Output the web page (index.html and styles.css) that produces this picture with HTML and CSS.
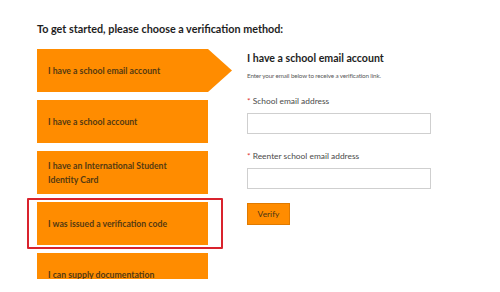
FILE: index.html
```html
<!DOCTYPE html>
<html>
<head>
<meta charset="utf-8">
<link rel="stylesheet" href="styles.css">
</head>
<body>
<div class="page">
  <h1 class="title">To get started, please choose a verification method:</h1>
  <div class="main">
    <div class="methods">
      <div class="method active"><span>I have a school email account</span></div>
      <div class="method"><span>I have a school account</span></div>
      <div class="method"><span>I have an International Student<br>Identity Card</span></div>
      <div class="method highlighted"><span>I was issued a verification code</span></div>
      <div class="method"><span>I can supply documentation</span></div>
    </div>
    <div class="panel">
      <h2 class="panel-title">I have a school email account</h2>
      <p class="panel-sub">Enter your email below to receive a verification link.</p>
      <label class="field-label"><span class="req">*</span> School email address</label>
      <div class="input"></div>
      <label class="field-label second"><span class="req">*</span> Reenter school email address</label>
      <div class="input"></div>
      <div class="verify">Verify</div>
    </div>
  </div>
</div>
</body>
</html>
```

FILE: styles.css
```css
html, body {
  margin: 0;
  padding: 0;
  background: #ffffff;
}
body {
  font-family: Lato, "Open Sans", sans-serif;
  width: 500px;
  height: 292px;
  overflow: hidden;
}
.page {
  padding-top: 22px;
}
.title {
  margin: 0 0 13px 37px;
  font-size: 10.8px;
  line-height: 14px;
  font-weight: 700;
  color: #1e1e1e;
}
.main {
  display: flex;
  height: 230px;
  overflow: hidden;
  padding-left: 37px;
}
.methods {
  width: 195px;
  display: flex;
  flex-direction: column;
  gap: 8px;
  flex-shrink: 0;
}
.method {
  position: relative;
  width: 171px;
  height: 43px;
  flex-shrink: 0;
  background: #ff8c00;
  display: flex;
  align-items: center;
  padding-left: 11px;
  box-sizing: border-box;
  font-size: 8.7px;
  line-height: 14px;
  font-weight: 700;
  color: #553a12;
}
.method.active {
  width: 195px;
  clip-path: polygon(0 0, 171px 0, 100% 50%, 171px 100%, 0 100%);
}
.method.highlighted::after {
  content: "";
  position: absolute;
  left: -10px;
  top: -4px;
  right: -15px;
  bottom: -4px;
  border: 2px solid #d9232d;
  border-radius: 1px;
}
.panel {
  margin-left: 15px;
  padding-top: 2px;
  display: flex;
  flex-direction: column;
  align-items: flex-start;
}
.panel-title {
  margin: 0;
  font-size: 10.6px;
  line-height: 14px;
  font-weight: 700;
  color: #1e1e1e;
}
.panel-sub {
  margin: 5px 0 0 0;
  font-size: 6.3px;
  line-height: 12px;
  letter-spacing: -0.15px;
  font-weight: 400;
  color: #5a5a5a;
}
.field-label {
  margin-top: 13px;
  font-size: 8.4px;
  line-height: 12px;
  color: #4a4a4a;
}
.field-label.second {
  margin-top: 16px;
}
.req {
  color: #e0312b;
}
.input {
  margin-top: 6px;
  width: 184px;
  height: 21px;
  box-sizing: border-box;
  border: 1.5px solid #cfcfcf;
  background: #fff;
}
.verify {
  margin-top: 14px;
  width: 43px;
  height: 22px;
  box-sizing: border-box;
  background: #ff8c00;
  border: 1px solid #e07a00;
  font-size: 8.4px;
  line-height: 20px;
  text-align: center;
  color: #4a3414;
}
```
